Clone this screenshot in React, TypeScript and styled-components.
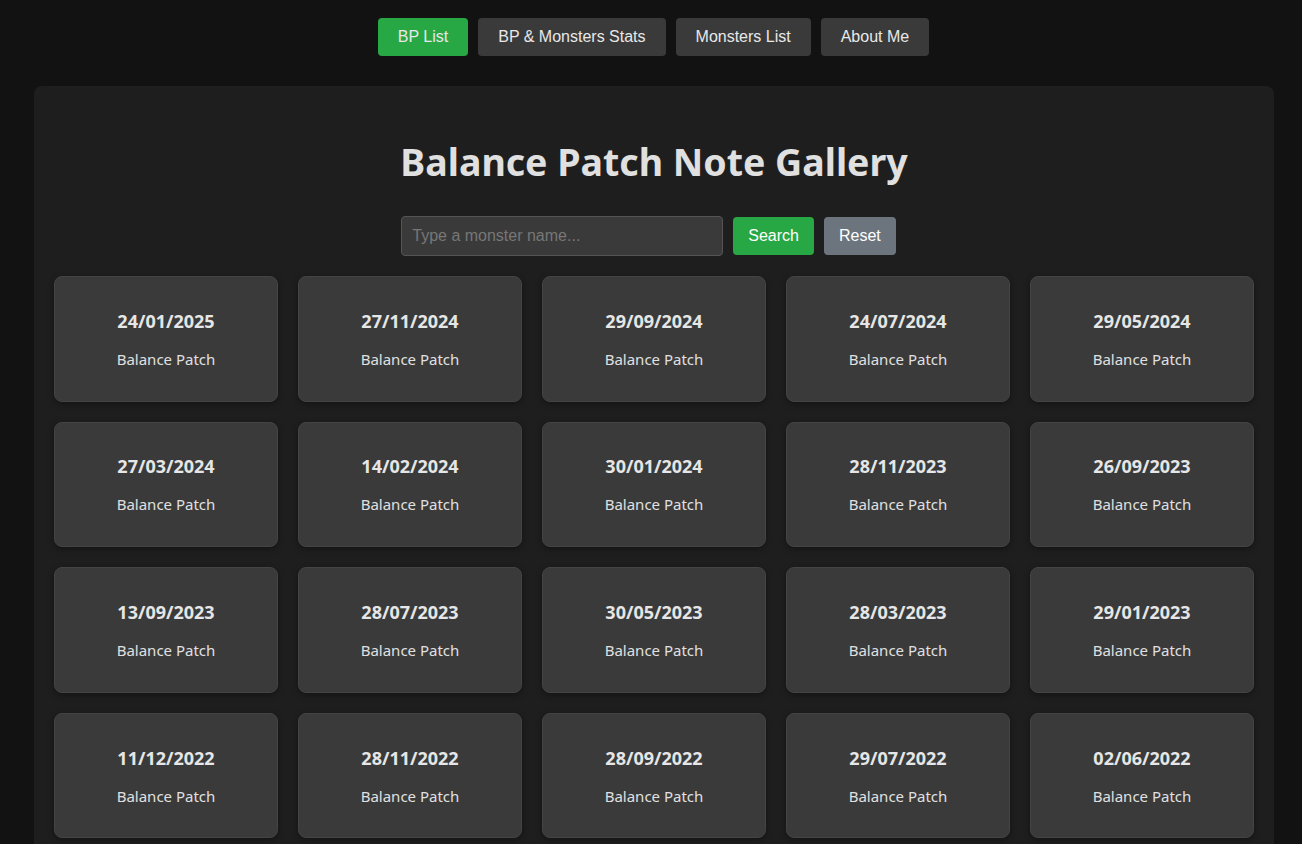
import React from "react";
import styled, { createGlobalStyle } from "styled-components";

const GlobalStyle = createGlobalStyle`
    body {
        margin: 0;
        background-color: #121212;
        color: #e0e0e0;
        font-family: "Liberation Sans", Arial, sans-serif;
    }
`;

const patches: string[] = [
    "24/01/2025", "27/11/2024", "29/09/2024", "24/07/2024", "29/05/2024",
    "27/03/2024", "14/02/2024", "30/01/2024", "28/11/2023", "26/09/2023",
    "13/09/2023", "28/07/2023", "30/05/2023", "28/03/2023", "29/01/2023",
    "11/12/2022", "28/11/2022", "28/09/2022", "29/07/2022", "02/06/2022",
];

const Nav = styled.nav`
    display: flex;
    justify-content: center;
    gap: 10px;
    padding: 18px 0 30px;
    margin-left: 5px;
`;

const NavButton = styled.button<{ $active?: boolean }>`
    height: 38px;
    padding: 0 20px;
    border: none;
    border-radius: 4px;
    background-color: ${(p) => (p.$active ? "#28a745" : "#3a3a3a")};
    color: #e8e8e8;
    font-family: "Liberation Sans", Arial, sans-serif;
    font-size: 16px;
    cursor: pointer;
`;

const Container = styled.main`
    width: 1200px;
    margin-left: 34px;
    padding: 0 20px 20px;
    background-color: #1e1e1e;
    border-radius: 8px;
    box-sizing: content-box;
`;

const Title = styled.h1`
    margin: 0;
    padding: 52px 0 30px;
    text-align: center;
    font-family: "Noto Sans", "Open Sans", sans-serif;
    font-size: 37.5px;
    line-height: 48px;
    font-weight: 700;
    color: #e0e0e0;
`;

const SearchBar = styled.div`
    display: flex;
    justify-content: center;
    align-items: center;
    gap: 10px;
    padding-right: 11px;
    margin-bottom: 20px;
`;

const SearchInput = styled.input`
    width: 322px;
    height: 40px;
    box-sizing: border-box;
    padding: 0 10px;
    border: 1px solid #555;
    border-radius: 4px;
    background-color: #3a3a3a;
    color: #e0e0e0;
    font-family: "Liberation Sans", Arial, sans-serif;
    font-size: 16px;

    &::placeholder {
        color: #777;
    }
`;

const ActionButton = styled.button<{ $tone: "green" | "gray" }>`
    height: 38px;
    padding: 0 15px;
    border: none;
    border-radius: 4px;
    background-color: ${(p) => (p.$tone === "green" ? "#28a745" : "#6c757d")};
    color: #fff;
    font-family: "Liberation Sans", Arial, sans-serif;
    font-size: 16px;
    cursor: pointer;
`;

const Grid = styled.div`
    display: grid;
    grid-template-columns: repeat(5, 224px);
    gap: 20px;
`;

const Card = styled.div`
    height: 125.6px;
    box-sizing: border-box;
    display: flex;
    flex-direction: column;
    align-items: center;
    justify-content: center;
    gap: 16px;
    background-color: #3a3a3a;
    border: 1px solid #444;
    border-radius: 8px;
    box-shadow: 0 2px 6px rgba(0, 0, 0, 0.35);
    font-family: "Noto Sans", "Open Sans", sans-serif;
    cursor: pointer;
`;

const CardDate = styled.div`
    font-size: 18px;
    line-height: 24px;
    font-weight: 700;
    color: #e6e6e6;
`;

const CardLabel = styled.div`
    font-size: 15px;
    line-height: 20px;
    color: #e0e0e0;
`;

export default function App() {
    return (
        <>
            <GlobalStyle />
            <Nav>
                <NavButton $active>BP List</NavButton>
                <NavButton>BP &amp; Monsters Stats</NavButton>
                <NavButton>Monsters List</NavButton>
                <NavButton>About Me</NavButton>
            </Nav>
            <Container>
                <Title>Balance Patch Note Gallery</Title>
                <SearchBar>
                    <SearchInput placeholder="Type a monster name..." />
                    <ActionButton $tone="green">Search</ActionButton>
                    <ActionButton $tone="gray">Reset</ActionButton>
                </SearchBar>
                <Grid>
                    {patches.map((date) => (
                        <Card key={date}>
                            <CardDate>{date}</CardDate>
                            <CardLabel>Balance Patch</CardLabel>
                        </Card>
                    ))}
                </Grid>
            </Container>
        </>
    );
}
